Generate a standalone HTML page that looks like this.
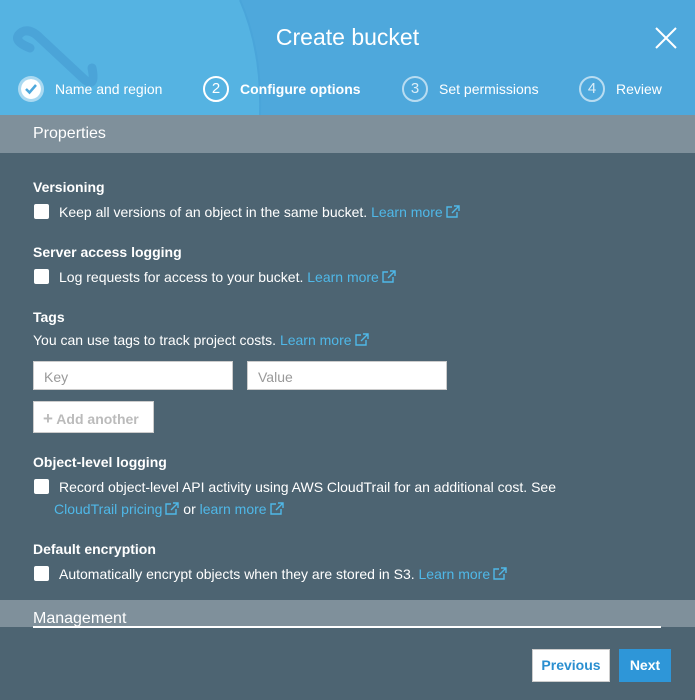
<!DOCTYPE html>
<html><head><style>
*{margin:0;padding:0;box-sizing:border-box}
body{width:695px;height:700px;overflow:hidden;background:#4d6472;font-family:"Liberation Sans",sans-serif;color:#fff;position:relative;font-size:14px}
.a{position:absolute;white-space:nowrap}
.hdr{position:absolute;left:0;top:0;width:695px;height:115px;background:#4ea8dc;overflow:hidden}
.cb{position:absolute;width:15px;height:15px;background:#fff;border-radius:2px}
.lnk{color:#4fb8e8}
.ext{display:inline-block;vertical-align:-1px;margin-left:3px}
h4{font-size:14px;font-weight:bold}
.inp{position:absolute;height:29px;background:#fff;border:1px solid #ccc;color:#999;font-size:14px;padding:7px 10px}
.circ{position:absolute;width:26px;height:26px;border:2px solid rgba(255,255,255,.6);border-radius:50%;font-size:15px;text-align:center;line-height:22px;color:rgba(255,255,255,.8)}
</style></head><body>
<div class="hdr">
<svg class="a" style="left:0;top:0" width="290" height="115"><path d="M0 0 H240 Q262 50 260 115 H0Z" fill="#55b3e2"/><path d="M240 0 Q262 50 260 115" fill="none" stroke="#4aa5da" stroke-width="2"/><path d="M30 48 Q10 40 22 32 Q30 28 40 38 L85 80 Q96 88 92 68" fill="none" stroke="#4ba4d8" stroke-width="9" stroke-linecap="round" stroke-linejoin="round"/></svg>
<div class="a" style="left:0;width:695px;top:24px;text-align:center;font-size:23px">Create bucket</div>
<svg class="a" style="left:655px;top:27px" width="22" height="22"><path d="M1 1L21 21M21 1L1 21" stroke="#fff" stroke-width="2"/></svg>
<div class="circ" style="left:18px;top:76px;background:#fff;border:3px solid rgba(255,255,255,.5);background-clip:padding-box"><svg width="20" height="20"><path d="M5 10l3.5 3.5 6.5-7.5" fill="none" stroke="#4ea8dc" stroke-width="2.5"/></svg></div>
<div class="a" style="left:55px;top:81px">Name and region</div>
<div class="circ" style="left:203px;top:76px;border-color:#fff;color:#fff">2</div>
<div class="a" style="left:240px;top:81px;font-weight:bold">Configure options</div>
<div class="circ" style="left:402px;top:76px">3</div>
<div class="a" style="left:439px;top:81px">Set permissions</div>
<div class="circ" style="left:579px;top:76px">4</div>
<div class="a" style="left:616px;top:81px">Review</div>
</div>
<div class="a" style="left:0;top:115px;width:695px;height:38px;background:#7f909b"></div>
<div class="a" style="left:33px;top:125px;font-size:16px">Properties</div>

<h4 class="a" style="left:33px;top:179px">Versioning</h4>
<div class="cb" style="left:34px;top:204px"></div>
<div class="a" style="left:59px;top:204px">Keep all versions of an object in the same bucket. <span class="lnk">Learn more<svg class="ext" width="14" height="13"><path d="M6 2H1v10h10V7M8 1h5v5M13 1L6 8" fill="none" stroke="#4fb8e8" stroke-width="1.4"/></svg></span></div>

<h4 class="a" style="left:33px;top:244px">Server access logging</h4>
<div class="cb" style="left:34px;top:269px"></div>
<div class="a" style="left:59px;top:269px">Log requests for access to your bucket. <span class="lnk">Learn more<svg class="ext" width="14" height="13"><path d="M6 2H1v10h10V7M8 1h5v5M13 1L6 8" fill="none" stroke="#4fb8e8" stroke-width="1.4"/></svg></span></div>

<h4 class="a" style="left:33px;top:309px">Tags</h4>
<div class="a" style="left:33px;top:332px">You can use tags to track project costs. <span class="lnk">Learn more<svg class="ext" width="14" height="13"><path d="M6 2H1v10h10V7M8 1h5v5M13 1L6 8" fill="none" stroke="#4fb8e8" stroke-width="1.4"/></svg></span></div>
<div class="inp" style="left:33px;top:361px;width:200px">Key</div>
<div class="inp" style="left:247px;top:361px;width:200px">Value</div>
<div class="a" style="left:33px;top:401px;width:121px;height:32px;background:#fff;border:1px solid #ccc;color:#bbb;font-weight:bold;padding:7px 0 0 9px"><span style="font-size:17px">+</span> Add another</div>

<h4 class="a" style="left:33px;top:454px">Object-level logging</h4>
<div class="cb" style="left:34px;top:479px"></div>
<div class="a" style="left:59px;top:479px">Record object-level API activity using AWS CloudTrail for an additional cost. See</div>
<div class="a" style="left:54px;top:501px"><span class="lnk">CloudTrail pricing<svg class="ext" width="14" height="13"><path d="M6 2H1v10h10V7M8 1h5v5M13 1L6 8" fill="none" stroke="#4fb8e8" stroke-width="1.4"/></svg></span> or <span class="lnk">learn more<svg class="ext" width="14" height="13"><path d="M6 2H1v10h10V7M8 1h5v5M13 1L6 8" fill="none" stroke="#4fb8e8" stroke-width="1.4"/></svg></span></div>

<h4 class="a" style="left:33px;top:541px">Default encryption</h4>
<div class="cb" style="left:34px;top:566px"></div>
<div class="a" style="left:59px;top:566px">Automatically encrypt objects when they are stored in S3. <span class="lnk">Learn more<svg class="ext" width="14" height="13"><path d="M6 2H1v10h10V7M8 1h5v5M13 1L6 8" fill="none" stroke="#4fb8e8" stroke-width="1.4"/></svg></span></div>

<div class="a" style="left:0;top:600px;width:695px;height:27px;background:#7f909b"></div>
<div class="a" style="left:33px;top:610px;font-size:16px">Management</div>
<div class="a" style="left:33px;top:626px;width:628px;height:2px;background:#fff"></div>

<div class="a" style="left:532px;top:649px;width:78px;height:33px;background:#fff;border:1px solid #ccc;color:#2a8fd0;font-weight:bold;text-align:center;line-height:31px">Previous</div>
<div class="a" style="left:619px;top:649px;width:52px;height:33px;background:#2e96d8;color:#fff;font-weight:bold;text-align:center;line-height:33px">Next</div>
</body></html>
